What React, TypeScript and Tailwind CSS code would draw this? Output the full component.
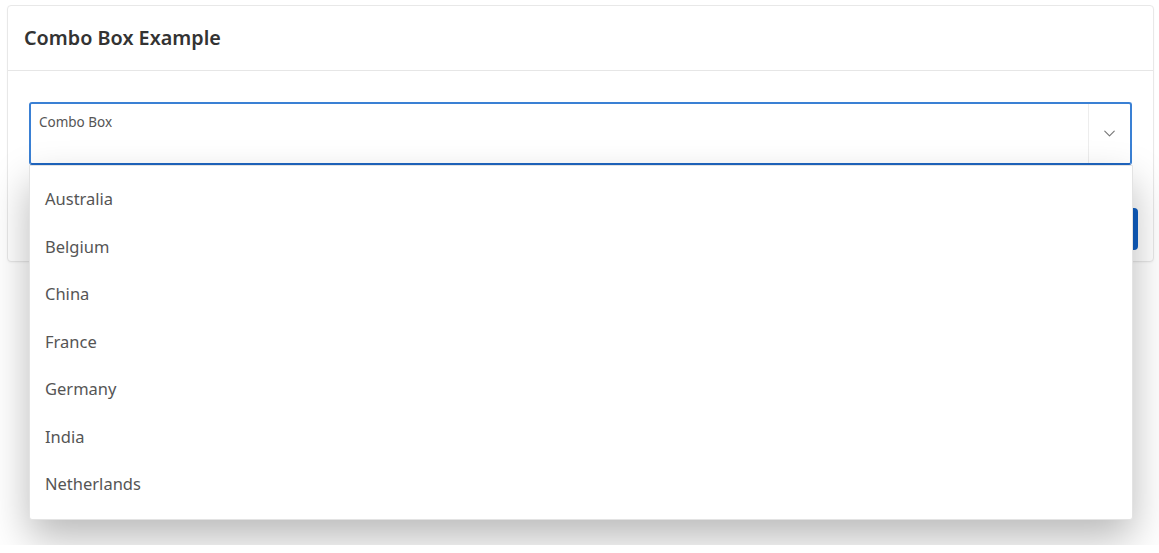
import React, { useState } from 'react';
import { ChevronDown } from 'lucide-react';

const COUNTRIES = ['Australia', 'Belgium', 'China', 'France', 'Germany', 'India', 'Netherlands'];

export default function App() {
  const [open] = useState(true);
  const [value] = useState('');

  return (
    <div
      className="h-[553px] w-full bg-white overflow-hidden"
      style={{ fontFamily: '"Noto Sans", "Open Sans", sans-serif' }}
    >
      <div className="h-[545px] overflow-hidden pt-[5px] pl-[7px] pr-[5px]">
        <div className="relative rounded-[4px] border border-[#e8e8e8] bg-white shadow-[0_1px_2px_rgba(0,0,0,0.04)]">
          <div className="h-[65px] flex items-center px-[16px] border-b border-[#e6e6e6]">
            <h1 className="text-[19.8px] font-semibold text-[#333333]">Combo Box Example</h1>
          </div>

          <div className="px-[16px] pt-[31px] pb-[11px]">
            <div className="relative mx-[5px]">
              <div className="flex h-[63px] rounded-[3px] border-2 border-[#3a80d4] border-b-[#1f66c1] bg-white">
                <div className="flex-1 pl-[8px] pt-[10px]">
                  <div className="text-[13.5px] leading-[16px] text-[#555555]">Combo Box</div>
                  <input
                    value={value}
                    readOnly
                    className="w-full outline-none text-[14px] text-[#333333] bg-transparent"
                  />
                </div>
                <button className="w-[42px] flex items-center justify-center border-l border-[#ededed] text-[#767676]">
                  <ChevronDown size={19} strokeWidth={1.4} />
                </button>
              </div>

              {open && (
                <ul className="absolute left-0 right-[-1px] top-[63px] z-10 py-[10px] bg-white rounded-b-[3px] border border-[#e3e3e3] shadow-[0_18px_40px_rgba(0,0,0,0.28)]">
                  {COUNTRIES.map(c => (
                    <li
                      key={c}
                      className="h-[47.5px] flex items-center pl-[15px] text-[16.5px] text-[#555555]"
                    >
                      {c}
                    </li>
                  ))}
                </ul>
              )}
            </div>

            <div className="flex justify-end mt-[43px] mr-[-1px]">
              <button className="h-[42px] px-[24px] rounded-[4px] bg-[#0f5fc4] text-white text-[14px] font-semibold">
                Submit
              </button>
            </div>
          </div>
        </div>
      </div>
    </div>
  );
}
